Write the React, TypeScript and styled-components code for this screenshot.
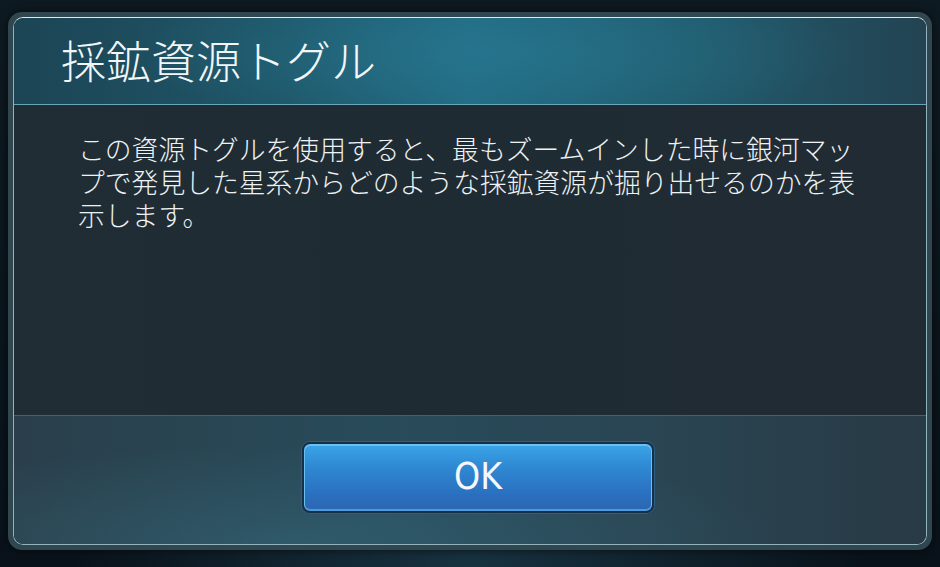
import styled, { createGlobalStyle } from 'styled-components';

const GlobalStyle = createGlobalStyle`
  html, body {
    margin: 0;
    padding: 0;
    background: #0a1217;
  }
  * {
    box-sizing: border-box;
  }
`;

const Screen = styled.main`
  width: 940px;
  height: 567px;
  padding: 12px 8px 17px 8px;
  background:
    radial-gradient(ellipse at 50% 100%, rgba(40, 90, 110, 0.45), transparent 60%),
    linear-gradient(180deg, #0e1a21 0%, #09121a 100%);
  font-family: 'Noto Sans CJK JP', 'Noto Sans', sans-serif;
`;

const Frame = styled.section`
  height: 100%;
  border: 5px solid #30474f;
  border-radius: 14px;
  background: #1f2d35;
  box-shadow: 0 0 10px rgba(0, 0, 0, 0.6);
`;

const Dialog = styled.div`
  height: 100%;
  display: flex;
  flex-direction: column;
  border: 1.5px solid #92b3be;
  border-top-color: #d8ebf2;
  border-radius: 10px;
  overflow: hidden;
`;

const Header = styled.header`
  height: 87px;
  flex: none;
  display: flex;
  align-items: center;
  padding: 0 0 4px 47px;
  border-bottom: 1px solid #6aa6ba;
  background:
    radial-gradient(ellipse 40% 90% at 52% 40%, rgba(40, 125, 150, 0.55), transparent 100%),
    linear-gradient(
      90deg,
      #1c4555 0%,
      #1f5668 30%,
      #226a82 50%,
      #215a6c 75%,
      #234352 100%
    );
`;

const Title = styled.h1`
  margin: 0;
  color: #f1f6f8;
  font-size: 45px;
  font-weight: 300;
  letter-spacing: 0;
`;

const Body = styled.div`
  flex: 1;
  padding: 27px 0 0 64px;
  background: linear-gradient(90deg, #1f2d35 0%, #1f2b33 50%, #212b34 100%);
`;

const Message = styled.p`
  width: 800px;
  margin: 0;
  color: #edf2f4;
  font-size: 26.8px;
  line-height: 33px;
  font-weight: 300;
`;

const Footer = styled.footer`
  height: 129px;
  flex: none;
  display: flex;
  justify-content: center;
  padding: 26px 0 0 16px;
  border-top: 1px solid #47606b;
  background:
    radial-gradient(ellipse at 30% 100%, rgba(60, 120, 140, 0.35), transparent 55%),
    linear-gradient(90deg, #2a3f4b 0%, #284b5a 40%, #2a4553 70%, #283a45 100%);
`;

const OkButton = styled.button`
  width: 352px;
  height: 71px;
  border: 2px solid #17304a;
  border-radius: 8px;
  padding: 0 0 2px;
  box-shadow:
    inset 0 1px 0 1px #6cc0f0,
    inset 0 -1px 0 1px #4c9ad8,
    0 0 0 1px #2d5f85;
  background: linear-gradient(
    180deg,
    #3ba6e8 0%,
    #2f88d2 35%,
    #2a70c0 75%,
    #2c66b0 100%
  );
  color: #f4f8fc;
  font-family: 'DejaVu Sans Condensed', 'DejaVu Sans', sans-serif;
  font-stretch: condensed;
  font-size: 37px;
  font-weight: 400;
  letter-spacing: 0;
  cursor: pointer;
`;

export default function App() {
  return (
    <>
      <GlobalStyle />
      <Screen>
        <Frame>
          <Dialog>
            <Header>
              <Title>採鉱資源トグル</Title>
            </Header>
            <Body>
              <Message>
                この資源トグルを使用すると、最もズームインした時に銀河マップで発見した星系からどのような採鉱資源が掘り出せるのかを表示します。
              </Message>
            </Body>
            <Footer>
              <OkButton type="button">OK</OkButton>
            </Footer>
          </Dialog>
        </Frame>
      </Screen>
    </>
  );
}
